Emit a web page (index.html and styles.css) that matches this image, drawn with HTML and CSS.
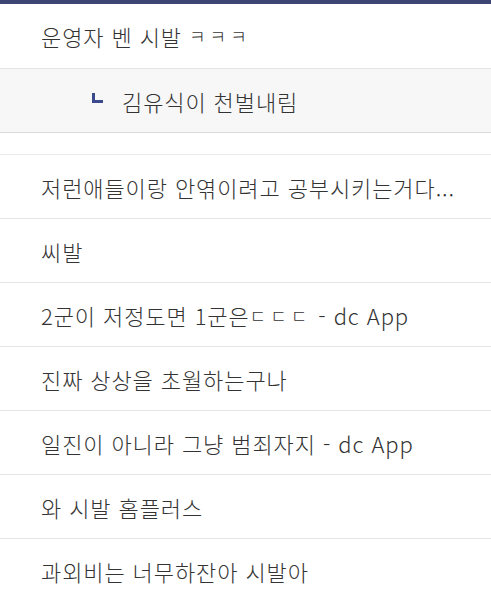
FILE: index.html
```html
<!DOCTYPE html>
<html lang="ko">
<head>
<meta charset="utf-8">
<link rel="stylesheet" href="styles.css">
</head>
<body>
<ul class="list">
  <li class="row">운영자 벤 시발 <span class="jamo">ㅋㅋㅋ</span></li>
  <li class="row reply"><span class="reply-mark"></span><span>김유식이 천벌내림</span></li>
  <li class="spacer"></li>
  <li class="row">저런애들이랑 안엮이려고 공부시키는거다...</li>
  <li class="row">씨발</li>
  <li class="row">2군이 저정도면 1군은<span class="jamo">ㄷㄷㄷ</span> - dc App</li>
  <li class="row">진짜 상상을 초월하는구나</li>
  <li class="row">일진이 아니라 그냥 범죄자지 - dc App</li>
  <li class="row">와 시발 홈플러스</li>
  <li class="row">과외비는 너무하잔아 시발아</li>
</ul>
</body>
</html>
```
FILE: styles.css
```css
html, body {
  margin: 0;
  padding: 0;
  background: #ffffff;
}
body {
  font-family: "Noto Sans CJK KR", "Noto Sans", sans-serif;
  color: #333333;
}
.list {
  list-style: none;
  margin: 0;
  padding: 0;
  border-top: 4px solid #3d4673;
}
.row {
  height: 63px;
  display: flex;
  align-items: center;
  padding: 0 20px 0 41px;
  border-bottom: 1px solid #e4e4e4;
  font-size: 22px;
  font-weight: 300;
  line-height: 26px;
  white-space: pre;
  overflow: hidden;
  letter-spacing: 0.9px;
}
.row:first-child {
  height: 64px;
}
.jamo {
  font-size: 18px;
  letter-spacing: 4px;
}
.reply {
  background: #f7f7f7;
  padding-left: 92px;
  border-bottom-color: #d9d9d9;
}
.reply-mark {
  width: 8px;
  height: 7px;
  border-left: 3px solid #3b4a8c;
  border-bottom: 3px solid #3b4a8c;
  margin-right: 19px;
  margin-top: -6px;
}
.spacer {
  height: 21px;
  border-bottom: 1px solid #ececec;
}
```
